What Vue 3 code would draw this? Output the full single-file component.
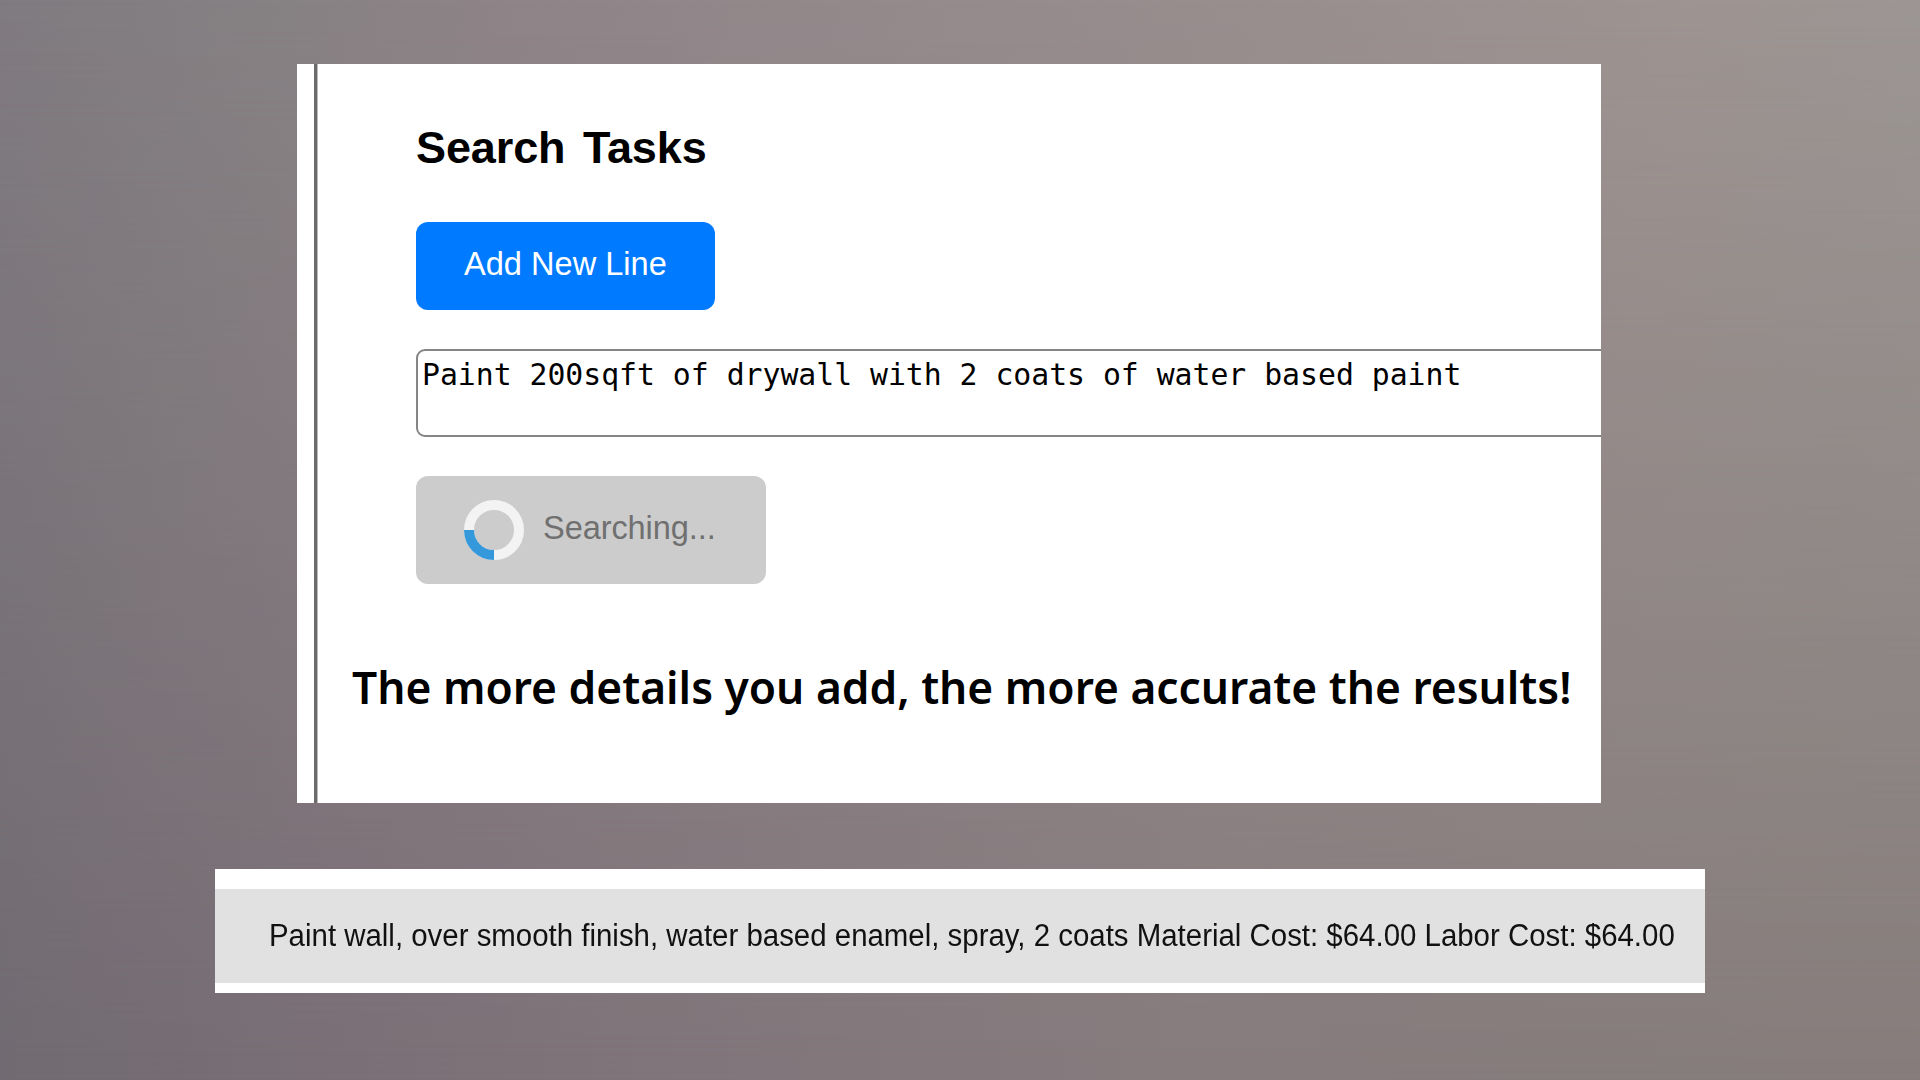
<script setup>
const query = 'Paint 200sqft of drywall with 2 coats of water based paint'
const result = 'Paint wall, over smooth finish, water based enamel, spray, 2 coats Material Cost: $64.00 Labor Cost: $64.00'
</script>

<template>
  <main class="stage">
    <section class="panel">
      <div class="rule"></div>
      <div class="content">
        <h1><span>Search Tasks</span></h1>
        <button class="add"><span>Add New Line</span></button>
        <div class="field"><span>{{ query }}</span></div>
        <button class="search" disabled>
          <svg class="spinner" viewBox="0 0 60 60">
            <circle cx="30" cy="30" r="25" fill="none" stroke="#f3f3f3" stroke-width="10" />
            <path d="M5 30A25 25 0 0 0 30 55" fill="none" stroke="#3498db" stroke-width="10" />
          </svg>
          <span>Searching...</span>
        </button>
        <p class="hint"><span>The more details you add, the more accurate the results!</span></p>
      </div>
    </section>
    <section class="result">
      <div class="row"><span>{{ result }}</span></div>
    </section>
  </main>
</template>

<style>
body {
  margin: 0;
}
</style>

<style scoped>
.stage {
  position: relative;
  z-index: 0;
  box-sizing: border-box;
  width: 1920px;
  height: 1080px;
  padding-top: 64px;
  overflow: hidden;
  font-family: "Liberation Sans", Arial, sans-serif;
  background: linear-gradient(100deg, #807b80 0%, #878284 14%, #8f8488 24%, #968b8d 48%, #9e9492 80%, #9b9795 96%);
}
/* darker lower tones, faded in from the top edge */
.stage::before {
  content: "";
  position: absolute;
  inset: 0;
  z-index: -1;
  background: linear-gradient(90deg, #706a71 0%, #796e75 16%, #80757a 37%, #867b7d 62%, #867c7b 100%);
  mask-image: linear-gradient(180deg, transparent 0%, #000 100%);
}
.panel {
  display: flex;
  width: 1304px;
  height: 739px;
  margin-left: 297px;
  overflow: hidden;
  background: #fff;
}
.rule {
  flex: none;
  width: 3px;
  margin-left: 17px;
  background: #6b6b6b;
  border-right: 1px solid #b8b8b8;
}
.content {
  display: flex;
  flex-direction: column;
  align-items: flex-start;
  flex: 1;
  min-width: 0;
  padding-left: 98px;
}
span {
  white-space: nowrap;
}
h1 {
  margin: 55px 0 0;
  height: 103px;
  font-size: 45px;
  line-height: 58px;
  letter-spacing: -0.1px;
  word-spacing: 5px;
  color: #000;
}
button {
  display: flex;
  align-items: center;
  box-sizing: border-box;
  padding: 0 0 0 48px;
  border: 0;
  border-radius: 12px;
  font: 32.6px "Liberation Sans", Arial, sans-serif;
}
.add {
  width: 299px;
  height: 88px;
  padding-bottom: 4px;
  color: #fff;
  background: #007bff;
}
.field {
  box-sizing: border-box;
  width: 1300px;
  height: 88px;
  margin-top: 39px;
  padding-left: 4px;
  border: 2px solid #858585;
  border-radius: 9px;
  font: 29.8px/47px "DejaVu Sans Mono", monospace;
  letter-spacing: -0.02px;
  color: #000;
}
.search {
  width: 350px;
  height: 108px;
  margin-top: 39px;
  color: #707070;
  background: #ccc;
}
.search span {
  padding-bottom: 4px;
  letter-spacing: -0.1px;
}
.spinner {
  width: 60px;
  height: 60px;
  margin: 0 19px 0 0;
}
.hint {
  margin: 73px 0 0 -64px;
  font: 600 44.3px/60px "Noto Sans", sans-serif;
  color: #000;
}
.result {
  box-sizing: border-box;
  width: 1490px;
  height: 124px;
  margin: 66px 0 0 215px;
  padding: 20px 0 10px;
  background: #fff;
}
.row {
  box-sizing: border-box;
  height: 94px;
  padding-left: 54px;
  background: #e1e1e1;
  font-size: 31px;
  line-height: 93px;
  color: #111;
}
.row span {
  display: inline-block;
  transform: scaleX(0.949);
  transform-origin: left;
}
</style>
